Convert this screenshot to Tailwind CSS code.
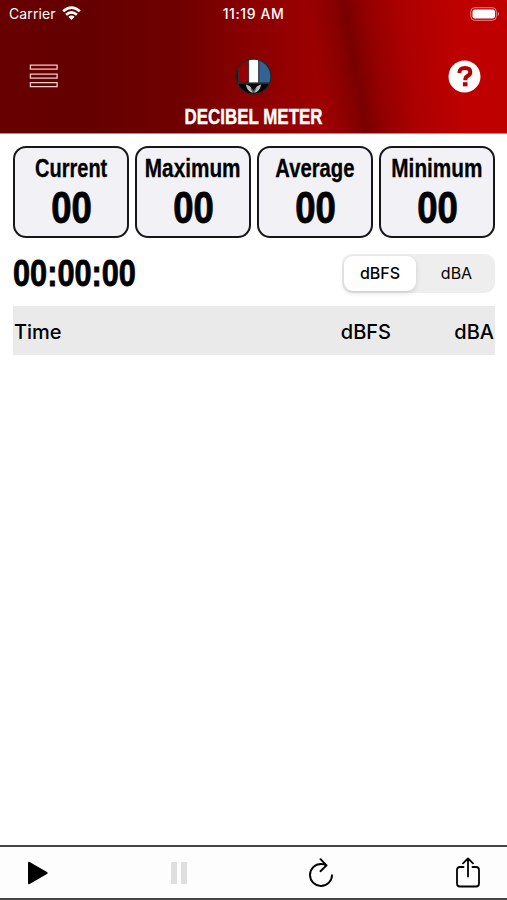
<!DOCTYPE html>
<html lang="en">
<head>
    <meta charset="UTF-8">
    <meta name="viewport" content="width=device-width, initial-scale=1.0">
    <title>Decibel Meter</title>
    <script src="https://cdn.jsdelivr.net/npm/@tailwindcss/browser@4"></script>
</head>
<body class="bg-white font-['Inter',sans-serif] text-black">
<div class="flex h-screen w-full flex-col overflow-hidden">
  <header class="relative h-[134px] shrink-0 overflow-hidden border-b border-[#c98080] bg-[linear-gradient(90deg,#670000_0%,#650000_17%,#700000_35%,#8b0000_50%,#9b0000_61%,#a60000_77%,#bd0000_92%,#c00000_100%)] text-white">
    <!-- fold in the red cloth -->
    <svg class="absolute inset-0" width="507" height="134" viewBox="0 0 507 134">
      <defs>
        <linearGradient id="fold" gradientUnits="userSpaceOnUse" x1="318" y1="78" x2="458" y2="55">
          <stop offset="0" stop-color="#800000" stop-opacity="0"/>
          <stop offset=".14" stop-color="#800000" stop-opacity=".5"/>
          <stop offset=".27" stop-color="#760000" stop-opacity=".95"/>
          <stop offset=".42" stop-color="#900000" stop-opacity=".8"/>
          <stop offset=".65" stop-color="#ac0000" stop-opacity=".7"/>
          <stop offset="1" stop-color="#c00000" stop-opacity=".6"/>
        </linearGradient>
      </defs>
      <rect width="507" height="134" fill="url(#fold)"/>
    </svg>
    <div class="relative grid h-[27px] grid-cols-3 items-center pr-[7px] pl-[9px] text-[14px]">
      <div class="flex items-center gap-1.5">
        <span class="tracking-[0.1px]">Carrier</span>
        <svg width="19" height="15" viewBox="0 0 19 15" fill="none" stroke="white" stroke-width="2.7">
          <path d="M1.2 5.3Q9.5-2.2 17.8 5.3"/>
          <path d="M4.1 8.7Q9.5 3.9 14.9 8.7"/>
          <path d="M9.5 14L6.4 10.8Q9.5 8.4 12.6 10.8Z" fill="white" stroke="none"/>
        </svg>
      </div>
      <span class="-ml-0.5 text-center text-[14px] font-medium tracking-[0.6px] whitespace-nowrap">11:19 AM</span>
      <svg class="justify-self-end" width="30" height="14" viewBox="0 0 30 14">
        <rect x=".8" y=".7" width="25.5" height="12.6" rx="3.8" fill="none" stroke="#e58d8d"/>
        <rect x="2.5" y="2.5" width="22.5" height="9" rx="2.2" fill="white"/>
        <path d="M27.8 4.8Q30.2 7 27.8 9.2Z" fill="#e58d8d"/>
      </svg>
    </div>
    <div class="relative mt-[31px] grid grid-cols-3 items-center pr-[26px] pl-[29px]">
      <svg class="mb-px" width="30" height="24" viewBox="0 0 30 24" fill="none" stroke="#f3cccc" stroke-width="1.3">
        <path d="M1.4 1.2H28.1V5.2H1.4ZM1.4 10.1H28.1V14.1H1.4ZM1.4 18.6H28.1V22.6H1.4Z"/>
      </svg>
      <svg class="mr-0.5 justify-self-center" width="37" height="37" viewBox="0 0 36 36">
        <defs><clipPath id="badge"><circle cx="18" cy="18" r="17"/></clipPath></defs>
        <g clip-path="url(#badge)">
          <rect width="36" height="36" fill="#050505"/>
          <path d="M0 0H13V24H3V0Z" fill="#970000"/>
          <path d="M13 0H23V24H13Z" fill="white"/>
          <path d="M23 0H36V24H23Z" fill="#356294"/>
          <path d="M13.2 0V24M23.2 0V24M1 24.5H35M3 9V24" stroke="#34343a" stroke-width="1.1"/>
          <path d="M10.5 25.5L14.5 27.5L18 32L21.5 27.5L25.5 25.5Q24.5 31 21 33.2Q18 34.5 15 33.2Q11.5 31 10.5 25.5Z" fill="#b9bcbc"/>
          <path d="M15.5 29.5L18 33.5L20.5 29.5" fill="none" stroke="#46494b"/>
        </g>
        <circle cx="18" cy="18" r="17" fill="none" stroke="#292429" stroke-width="1.2"/>
      </svg>
      <svg class="justify-self-end" width="33" height="33" viewBox="0 0 33 33">
        <circle cx="16.5" cy="16.5" r="16" fill="white"/>
        <path d="M11.4 13Q11.2 8 17 8Q22.3 8 22.3 12.2Q22.3 14.6 19.4 16.1Q17.3 17.2 17.3 20.2" fill="none" stroke="#b60000" stroke-width="4"/>
        <rect x="14.9" y="22.2" width="4.6" height="4.1" fill="#b60000"/>
      </svg>
    </div>
    <h1 class="relative mt-2.5 scale-x-[.77] text-center font-['Liberation_Sans',sans-serif] text-[22px] leading-6 font-bold [-webkit-text-stroke:0.4px_white]">DECIBEL METER</h1>
  </header>

  <main class="flex-1 pt-3 pr-3 pl-[13px]">
    <div class="grid grid-cols-4 gap-1.5 text-center font-['Liberation_Sans',sans-serif] font-bold">
      <div class="flex h-[92px] flex-col items-center rounded-[13px] border-2 border-[#17171a] bg-[#f1f1f6] pt-1.5">
        <div class="scale-x-[.8] text-[25px] leading-7 [-webkit-text-stroke:0.3px_black]">Current</div>
        <div class="mt-[3px] scale-x-[.83] text-[44px] leading-[46px] [-webkit-text-stroke:0.9px_black]">00</div>
      </div>
      <div class="flex h-[92px] flex-col items-center rounded-[13px] border-2 border-[#17171a] bg-[#f1f1f6] pt-1.5">
        <div class="scale-x-[.83] text-[25px] leading-7 [-webkit-text-stroke:0.3px_black]">Maximum</div>
        <div class="mt-[3px] scale-x-[.83] text-[44px] leading-[46px] [-webkit-text-stroke:0.9px_black]">00</div>
      </div>
      <div class="flex h-[92px] flex-col items-center rounded-[13px] border-2 border-[#17171a] bg-[#f1f1f6] pt-1.5">
        <div class="scale-x-[.81] text-[25px] leading-7 [-webkit-text-stroke:0.3px_black]">Average</div>
        <div class="mt-[3px] scale-x-[.83] text-[44px] leading-[46px] [-webkit-text-stroke:0.9px_black]">00</div>
      </div>
      <div class="flex h-[92px] flex-col items-center rounded-[13px] border-2 border-[#17171a] bg-[#f1f1f6] pt-1.5">
        <div class="scale-x-[.83] text-[25px] leading-7 [-webkit-text-stroke:0.3px_black]">Minimum</div>
        <div class="mt-[3px] scale-x-[.83] text-[44px] leading-[46px] [-webkit-text-stroke:0.9px_black]">00</div>
      </div>
    </div>

    <div class="mt-[15px] flex h-10 items-center justify-between">
      <div class="origin-left scale-x-[.83] pt-px font-['Liberation_Sans',sans-serif] text-[37px] leading-10 font-bold [-webkit-text-stroke:0.8px_black]">00:00:00</div>
      <div class="flex h-[39px] w-[153px] rounded-[10px] bg-[#eeeeef] p-0.5 text-center text-[16px] leading-[35px]">
        <div class="w-[72px] rounded-[9px] bg-white font-medium shadow-[0_2px_5px_#00000026]">dBFS</div>
        <div class="flex-1 pl-1">dBA</div>
      </div>
    </div>

    <div class="mt-[13px] grid h-[49px] grid-cols-[1fr_150px_104px] items-center bg-[#eaeaea] pt-0.5 text-[20px] font-medium">
      <div class="pl-px">Time</div>
      <div class="text-right">dBFS</div>
      <div class="pr-px text-right">dBA</div>
    </div>
  </main>

  <footer class="flex h-[55px] shrink-0 items-center justify-between border-y-2 border-[#454545] bg-[#fdfdfd] pr-[26px] pl-[27px]">
    <svg width="22" height="24" viewBox="0 0 22 24"><path d="M1 2Q1 .2 2.6 1L20 11Q21.6 12 20 13L2.6 23Q1 23.8 1 22Z"/></svg>
    <svg width="18" height="22" viewBox="0 0 18 22" fill="#dfdfdf"><path d="M1 0H7V22H1ZM11 0H17V22H11Z"/></svg>
    <svg width="26" height="30" viewBox="0 0 26 30" fill="none" stroke="black" stroke-width="1.9" stroke-linecap="round" stroke-linejoin="round">
      <path d="M18.5 7.4Q16.2 6 13 6A11 11 0 1 0 24 17.2M12.5 1.2L18.5 7.4L12.5 13.2"/>
    </svg>
    <svg width="26" height="31" viewBox="0 0 26 31" fill="none" stroke="black" stroke-width="1.8" stroke-linecap="round" stroke-linejoin="round">
      <path d="M8.5 10H5Q2 10 2 13V26.5Q2 29.5 5 29.5H21Q24 29.5 24 26.5V13Q24 10 21 10H17.5M13 19.5V1.5M8 6.3L13 1.4L18 6.3"/>
    </svg>
  </footer>
</div>
</body>
</html>
